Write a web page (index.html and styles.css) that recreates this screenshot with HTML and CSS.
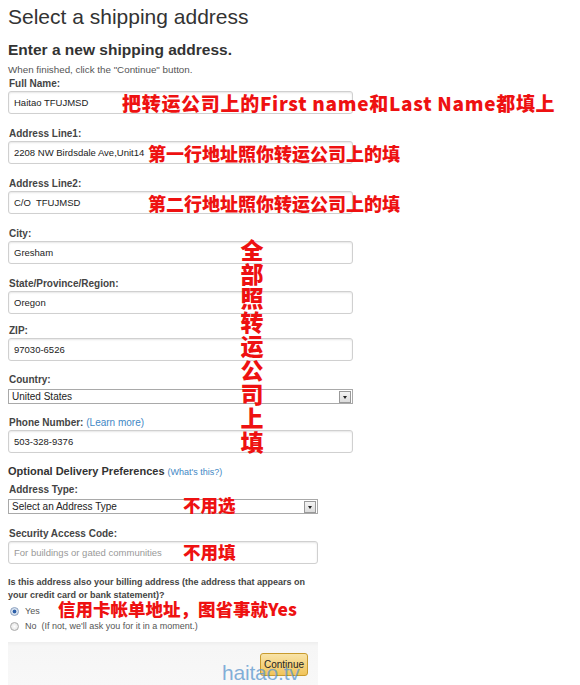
FILE: index.html
```html
<!DOCTYPE html>
<html lang="zh-CN">
<head>
  <meta charset="UTF-8">
  <title>Select a shipping address</title>
  <link rel="stylesheet" href="styles.css">
</head>
<body>
  <div class="page">
    <h1>Select a shipping address</h1>
    <h2>Enter a new shipping address.</h2>
    <p class="hint">When finished, click the "Continue" button.</p>

    <div class="field field-first">
      <label>Full Name:</label>
      <div class="box">
        <input class="text" type="text" value="Haitao TFUJMSD">
        <span class="note note-name">把转运公司上的First name和Last Name都填上</span>
      </div>
    </div>

    <div class="field">
      <label>Address Line1:</label>
      <div class="box">
        <input class="text" type="text" value="2208 NW Birdsdale Ave,Unit14">
        <span class="note note-line">第一行地址照你转运公司上的填</span>
      </div>
    </div>

    <div class="field">
      <label>Address Line2:</label>
      <div class="box">
        <input class="text" type="text" value="C/O  TFUJMSD">
        <span class="note note-line">第二行地址照你转运公司上的填</span>
      </div>
    </div>

    <div class="group">
      <span class="note note-vertical">全部照转运公司上填</span>

      <div class="field">
        <label>City:</label>
        <input class="text" type="text" value="Gresham">
      </div>

      <div class="field">
        <label>State/Province/Region:</label>
        <input class="text" type="text" value="Oregon">
      </div>

      <div class="field field-zip">
        <label>ZIP:</label>
        <input class="text" type="text" value="97030-6526">
      </div>

      <div class="field field-country">
        <label>Country:</label>
        <div class="select wide">
          <span>United States</span>
          <span class="arrow"></span>
        </div>
      </div>

      <div class="field field-phone">
        <label>Phone Number: <a href="#" class="link">(Learn more)</a></label>
        <input class="text" type="text" value="503-328-9376">
      </div>
    </div>

    <h3>Optional Delivery Preferences <a href="#" class="link">(What's this?)</a></h3>

    <div class="field field-type">
      <label>Address Type:</label>
      <div class="box">
        <div class="select">
          <span>Select an Address Type</span>
          <span class="arrow"></span>
        </div>
        <span class="note note-short note-select">不用选</span>
      </div>
    </div>

    <div class="field">
      <label>Security Access Code:</label>
      <div class="box">
        <input class="text narrow" type="text" placeholder="For buildings or gated communities">
        <span class="note note-short">不用填</span>
      </div>
    </div>

    <p class="question">Is this address also your billing address (the address that appears on<br>your credit card or bank statement)?</p>
    <div class="choices">
      <label class="choice"><span class="radio on"></span>Yes</label>
      <label class="choice"><span class="radio"></span>No&nbsp; (If not, we'll ask you for it in a moment.)</label>
      <span class="note note-billing">信用卡帐单地址，图省事就Yes</span>
    </div>

    <div class="actions">
      <button class="button-continue">Continue</button>
      <span class="watermark">haitao.tv</span>
    </div>
  </div>
</body>
</html>
```

FILE: styles.css
```css
html, body {
  margin: 0;
  padding: 0;
  background: white;
  font-family: 'Liberation Sans', Arial, sans-serif;
  color: #333;
}

.page {
  padding: 0 8px;
  width: 564px;
  height: 685px;
  overflow: hidden;
  box-sizing: border-box;
}

h1 {
  font-size: 21px;
  font-weight: normal;
  margin: 5px 0 0;
  line-height: 24px;
}

h2 {
  font-size: 15.5px;
  font-weight: bold;
  margin: 12px 0 0;
  line-height: 17px;
}

.hint {
  font-size: 9.8px;
  color: #555;
  margin: 6px 0 0;
  line-height: 11px;
}

/* form fields */

.field {
  margin-top: 13px;
}

.field-first {
  margin-top: 2px;
}

.field-zip {
  margin-top: 10px;
}

.field-country {
  margin-top: 12px;
}

.field-phone {
  margin-top: 12px;
}

.field-type {
  margin-top: 4px;
}

.field label {
  display: block;
  font-size: 10px;
  font-weight: bold;
  color: #444;
  line-height: 14px;
  margin-left: 1px;
}

.box {
  position: relative;
}

.text {
  display: block;
  width: 345px;
  height: 23px;
  box-sizing: border-box;
  border: 1px solid #d0d0d0;
  border-radius: 3px;
  box-shadow: inset 0 1px 2px #e6e6e6;
  padding: 0 5px;
  font-family: 'Liberation Sans', Arial, sans-serif;
  font-size: 9.5px;
  color: #222;
  background: white;
}

.text.narrow {
  width: 310px;
}

.text::placeholder {
  color: #999;
}

.link {
  color: #3f88c5;
  text-decoration: none;
  font-weight: normal;
}

.select {
  display: flex;
  align-items: center;
  justify-content: space-between;
  width: 310px;
  height: 15px;
  margin-top: 2px;
  box-sizing: border-box;
  border: 1px solid #a9a9a9;
  font-size: 10px;
  color: #222;
  padding: 0 1px 0 3px;
  background: white;
}

.select.wide {
  width: 345px;
}

.arrow {
  width: 10px;
  height: 10px;
  border: 1px solid #999;
  background: linear-gradient(#f4f4f4, #dcdcdc);
  position: relative;
}

.arrow::after {
  content: "";
  position: absolute;
  left: 3px;
  top: 4px;
  border-left: 2px solid transparent;
  border-right: 2px solid transparent;
  border-top: 3px solid #222;
}

.group {
  position: relative;
}

h3 {
  font-size: 11px;
  font-weight: bold;
  color: #333;
  margin: 11px 0 0;
  line-height: 14px;
}

h3 .link {
  font-size: 9px;
}

/* billing question */

.question {
  font-size: 9px;
  font-weight: bold;
  color: #444;
  line-height: 13px;
  margin: 12px 0 0;
  white-space: nowrap;
}

.choices {
  position: relative;
  margin-top: 2px;
}

.choice {
  display: flex;
  align-items: center;
  font-size: 9px;
  color: #555;
  line-height: 15px;
  gap: 6px;
  margin-left: 2px;
}

.radio {
  width: 7px;
  height: 7px;
  border-radius: 50%;
  border: 1px solid #aaa;
  background: radial-gradient(#fff, #ddd);
}

.radio.on {
  background: radial-gradient(#2d5fa8 30%, #cfdcec 45%, #e8eef6);
  border-color: #8aa0bf;
}

.actions {
  position: relative;
  width: 310px;
  height: 44px;
  margin-top: 8px;
  box-sizing: border-box;
  background: linear-gradient(#eee, #f6f6f6 4px, #f8f8f8);
  display: flex;
  justify-content: flex-end;
  align-items: flex-start;
  padding: 11px 10px 0 0;
}

.button-continue {
  width: 48px;
  height: 23px;
  font-family: 'Liberation Sans', Arial, sans-serif;
  font-size: 10px;
  color: #222;
  padding: 0;
  border: 1px solid #c89b2e;
  border-radius: 3px;
  background: linear-gradient(#f8e3a8, #f1c45a);
}

.watermark {
  position: absolute;
  left: 214px;
  top: 19px;
  font-size: 21px;
  color: rgba(90, 150, 205, 0.75);
  letter-spacing: -0.2px;
}

/* red annotations over the form */

.note {
  position: absolute;
  font-family: 'Noto Sans CJK SC', sans-serif;
  font-weight: 900;
  color: #ee1111;
  white-space: nowrap;
  line-height: 1;
}

.note-name {
  left: 114px;
  top: 2px;
  font-size: 19px;
  letter-spacing: 0.7px;
}

.note-line {
  left: 140px;
  top: 3px;
  font-size: 18px;
}

.note-vertical {
  left: 232px;
  top: 10px;
  width: 24px;
  white-space: normal;
  font-size: 23px;
  line-height: 24px;
  text-align: center;
}

.note-short {
  left: 175px;
  top: 2px;
  font-size: 17.5px;
}

.note-select {
  top: -3px;
}

.note-billing {
  left: 50px;
  top: -4px;
  font-size: 17.5px;
}
```
